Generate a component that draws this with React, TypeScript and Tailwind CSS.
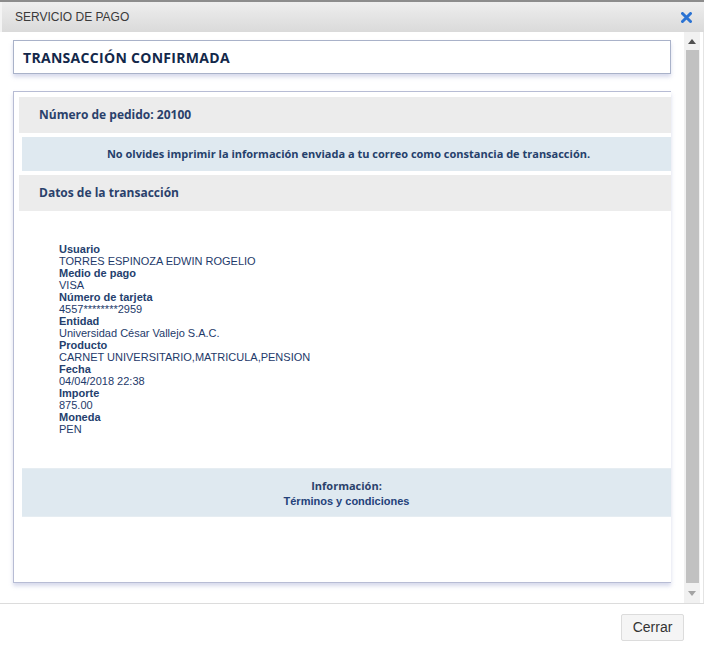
import React from "react";

const arial = { fontFamily: '"Liberation Sans", Arial, sans-serif' };
const open = { fontFamily: '"Open Sans", "Noto Sans", sans-serif' };

const details: [string, string][] = [
  ["Usuario", "TORRES ESPINOZA EDWIN ROGELIO"],
  ["Medio de pago", "VISA"],
  ["Número de tarjeta", "4557********2959"],
  ["Entidad", "Universidad César Vallejo S.A.C."],
  ["Producto", "CARNET UNIVERSITARIO,MATRICULA,PENSION"],
  ["Fecha", "04/04/2018 22:38"],
  ["Importe", "875.00"],
  ["Moneda", "PEN"],
];

export default function App() {
  return (
    <div className="w-[704px] h-[656px] bg-white flex flex-col overflow-hidden border-t-2 border-[#8c8c8c]" style={arial}>
      {/* Header */}
      <div className="h-[30px] shrink-0 flex items-center justify-between pl-[13px] pr-[12px] bg-gradient-to-b from-[#eeeeee] to-[#dadada] border-l-2 border-[#f4f4f4]">
        <span className="text-[12px] text-[#3a3a3a]">SERVICIO DE PAGO</span>
        <svg width="11" height="11" viewBox="0 0 11 11">
          <path d="M1.5 1.5 L9.5 9.5 M9.5 1.5 L1.5 9.5" stroke="#2b73d3" strokeWidth="3" strokeLinecap="round" />
        </svg>
      </div>

      {/* Body */}
      <div className="flex h-[572px] shrink-0 border-b border-[#dcdcdc]">
        <div className="flex-1 px-[13px] pt-[8px] flex flex-col">
          <div className="h-[34px] border border-[#a9b2c9] flex items-center pl-[9px] shadow-[0_3px_4px_rgba(140,150,200,0.35)]">
            <span className="text-[14px] font-bold text-[#13284a] tracking-[0.3px]" style={open}>TRANSACCIÓN CONFIRMADA</span>
          </div>

          <div className="mt-[17px] h-[492px] border-l border-t border-b border-[#b7bcd4] pl-[5px] pt-[5px] flex flex-col shadow-[0_3px_4px_rgba(140,150,200,0.35)]">
            <div className="h-[36px] bg-[#ececec] flex items-center pl-[20px]">
              <span className="text-[12px] font-bold text-[#2a416b]" style={open}>Número de pedido: 20100</span>
            </div>
            <div className="mt-[4px] ml-[3px] h-[34px] bg-[#dfe9f0] flex items-center justify-center">
              <span className="text-[11px] font-bold text-[#25406b] pl-[4px]" style={open}>No olvides imprimir la información enviada a tu correo como constancia de transacción.</span>
            </div>
            <div className="mt-[4px] h-[36px] bg-[#ececec] flex items-center pl-[20px]">
              <span className="text-[12px] font-bold text-[#2a416b]" style={open}>Datos de la transacción</span>
            </div>

            <div className="mt-[32px] pl-[40px] flex flex-col text-[11px] leading-[12px] text-[#1e3a6a]" style={arial}>
              {details.map(([k, v]) => (
                <React.Fragment key={k}>
                  <span className="font-bold text-[#253f6e]">{k}</span>
                  <span>{v}</span>
                </React.Fragment>
              ))}
            </div>

            <div className="mt-[33px] ml-[3px] h-[49px] bg-[#dfe9f0] flex flex-col items-center justify-center gap-[1px] border-y border-[#e6edf2] pt-[2px]">
              <span className="text-[11px] font-bold text-[#2a416b] leading-[15px]" style={open}>Información:</span>
              <span className="text-[11px] font-bold text-[#24427a] leading-[15px]" style={arial}>Términos y condiciones</span>
            </div>
          </div>
        </div>

        {/* Scrollbar */}
        <div className="w-[16px] shrink-0 bg-[#f1f1f1] flex flex-col items-center">
          <div className="h-[18px] w-full flex items-center justify-center">
            <svg width="8" height="5" viewBox="0 0 8 5"><path d="M0 5 L4 0 L8 5 Z" fill="#505050" /></svg>
          </div>
          <div className="w-[13px] flex-1 bg-[#c1c1c1]" />
          <div className="h-[20px] w-full flex items-center justify-center">
            <svg width="8" height="5" viewBox="0 0 8 5"><path d="M0 0 L4 5 L8 0 Z" fill="#a3a3a3" /></svg>
          </div>
        </div>
        <div className="w-[4px] shrink-0 border-r border-[#e4e4e4]" />
      </div>

      {/* Footer */}
      <div className="flex-1 flex justify-end items-start pt-[10px] pr-[20px]">
        <button className="w-[63px] h-[27px] bg-[#f5f5f5] border border-[#dcdcdc] rounded-[2px] text-[14px] text-[#333]" style={arial}>
          Cerrar
        </button>
      </div>
    </div>
  );
}
